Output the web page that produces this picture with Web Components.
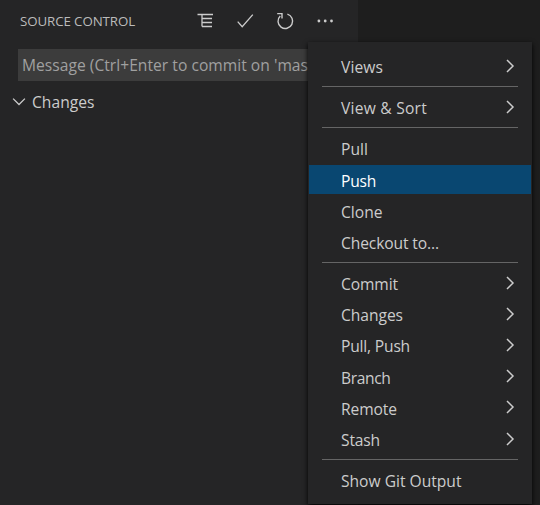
<!DOCTYPE html>
<html lang="en">
<head>
<meta charset="utf-8">
<title>Source Control</title>
<style>
html,body{margin:0;height:100%;overflow:hidden;background:#1e1e1e}
body{font-family:"Open Sans","Noto Sans",sans-serif;font-size:15.6px;color:#ccc}
</style>
</head>
<body>
<scm-app></scm-app>
<script>
const define = (name, html, setup) => {
  const t = document.createElement('template');
  t.innerHTML = html;
  customElements.define(name, class extends HTMLElement {
    connectedCallback() {
      if (this.shadowRoot) return;
      this.attachShadow({mode: 'open'}).append(t.content.cloneNode(true));
      if (setup) setup(this, this.shadowRoot);
    }
  });
};

/* A single-line label whose tracking is tuned to a given width. */
define('fit-label', `<style>:host{display:inline-block;white-space:nowrap;line-height:20px}span{display:inline-block}</style><span><slot></slot></span>`,
  (el, root) => {
    const s = root.querySelector('span');
    requestAnimationFrame(() => {
      const w = s.getBoundingClientRect().width;
      const n = el.textContent.length;
      s.style.letterSpacing = ((+el.getAttribute('width') - w) / n).toFixed(3) + 'px';
    });
  });

const icons = {
  tree: '<path d="M2.5 3.5H18M7 3.5V15.5M7 7.5H17M7 11.5H17M7 15.5H17"/>',
  check: '<path d="M2.7 10.6L7.2 15.8L17.8 3.6"/>',
  refresh: '<path d="M5.2 5A7.3 7.3 0 1 0 12.4 3.2M2.2 2.6H7V7.4" stroke-width="1.4"/>',
  more: '<g fill="#ccc" stroke="none"><circle cx="3.9" cy="10" r="1.4"/><circle cx="10.2" cy="10" r="1.4"/><circle cx="16.5" cy="10" r="1.4"/></g>',
  down: '<path d="M4.1 6.6L10 12.5L15.9 6.6"/>',
  right: '<path d="M7 4L13 10L7 16" stroke-width="1.5"/>'
};
define('ui-icon', `<style>:host{display:block;width:20px;height:20px;flex:none}svg{display:block}</style>
<svg width="20" height="20" viewBox="0 0 20 20" fill="none" stroke="#ccc" stroke-width="1.3"></svg>`,
  (el, root) => { root.querySelector('svg').innerHTML = icons[el.getAttribute('name')]; });

define('menu-item', `<style>
:host{display:flex;align-items:center;height:31.2px;box-sizing:border-box}
div{flex:1;display:flex;align-items:center;justify-content:space-between;height:28.8px;margin:0 1px;padding:0 11px 0 32px}
::slotted(fit-label){padding-top:2.6px}
:host([selected]) div{background:#094771;color:#fff}
</style><div><slot></slot></div>`, (el, root) => {
  if (el.hasAttribute('submenu')) root.querySelector('div').insertAdjacentHTML('beforeend', '<ui-icon name="right"></ui-icon>');
});
define('menu-separator', `<style>:host{display:block;height:1px;margin:4.4px 14px;background:#656565}</style>`);

define('context-menu', `<style>
:host{display:block;box-sizing:border-box;width:224px;height:462px;padding-top:8.6px;background:#252526;box-shadow:0 2px 5px #000}
</style><slot></slot>`);

define('scm-header', `<style>
:host{display:flex;align-items:center;justify-content:space-between;height:41px;padding:0 23px 0 20px}
fit-label{font-size:13.3px;color:#bbb}
nav{display:flex;gap:20px}
</style><fit-label width="115">SOURCE CONTROL</fit-label><nav><ui-icon name="tree"></ui-icon><ui-icon name="check"></ui-icon><ui-icon name="refresh"></ui-icon><ui-icon name="more"></ui-icon></nav>`);

define('commit-input', `<style>
:host{display:flex;align-items:center;height:32px;margin:8px 16px 0 18px;padding-left:4px;background:#3c3c3c;color:#a0a0a0;overflow:hidden}
</style><fit-label width="286">Message (Ctrl+Enter to commit on 'mas</fit-label>`);

define('scm-group', `<style>
:host{display:flex;align-items:center;height:42px;padding-left:9px;gap:3px}
</style><ui-icon name="down"></ui-icon><slot></slot>`);

define('scm-app', `<style>
:host{display:block;height:505px;background:#1e1e1e}
aside{width:358px;height:505px;background:#252526}
context-menu{position:absolute;left:308px;top:42px}
</style>
<aside>
<scm-header></scm-header>
<commit-input></commit-input>
<scm-group><fit-label width="62.5">Changes</fit-label></scm-group>
</aside>
<context-menu>
<menu-item submenu><fit-label width="42">Views</fit-label></menu-item>
<menu-separator></menu-separator>
<menu-item submenu><fit-label width="86">View &amp; Sort</fit-label></menu-item>
<menu-separator></menu-separator>
<menu-item><fit-label width="27">Pull</fit-label></menu-item>
<menu-item selected><fit-label width="35">Push</fit-label></menu-item>
<menu-item><fit-label width="41.5">Clone</fit-label></menu-item>
<menu-item><fit-label width="98">Checkout to...</fit-label></menu-item>
<menu-separator></menu-separator>
<menu-item submenu><fit-label width="57">Commit</fit-label></menu-item>
<menu-item submenu><fit-label width="62">Changes</fit-label></menu-item>
<menu-item submenu><fit-label width="69">Pull, Push</fit-label></menu-item>
<menu-item submenu><fit-label width="49.5">Branch</fit-label></menu-item>
<menu-item submenu><fit-label width="56">Remote</fit-label></menu-item>
<menu-item submenu><fit-label width="39">Stash</fit-label></menu-item>
<menu-separator></menu-separator>
<menu-item><fit-label width="120.5">Show Git Output</fit-label></menu-item>
</context-menu>`);
</script>
</body>
</html>
